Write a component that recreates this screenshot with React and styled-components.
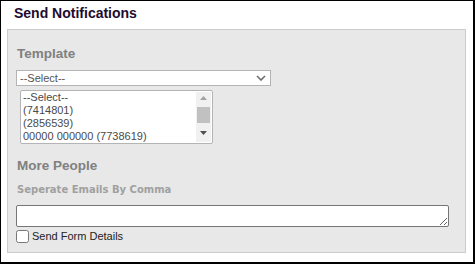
import React from "react";
import styled, { createGlobalStyle } from "styled-components";

const Global = createGlobalStyle`
  html, body { margin: 0; padding: 0; background: #fff; }
  body { font-family: "Liberation Sans", Arial, sans-serif; }
`;

const Frame = styled.div`
  box-sizing: border-box;
  width: 475px;
  height: 264px;
  border-style: solid;
  border-color: #000;
  border-width: 1px 2px 2px 1px;
  background: #fff;
  display: flex;
  flex-direction: column;
  padding: 4px 7px 9px 6px;
`;

const Title = styled.h2`
  margin: 0 0 8px 7px;
  font-size: 14px;
  line-height: 16px;
  font-weight: bold;
  color: #1e0b30;
`;

const Panel = styled.div`
  flex: 1;
  box-sizing: border-box;
  border: 1px solid #cccccc;
  background: #e8e8e8;
  padding: 16px 8px 0 8px;
  display: flex;
  flex-direction: column;
  align-items: flex-start;
`;

const Heading = styled.h3`
  margin: ${(p) => p.$top}px 0 ${(p) => p.$gap}px 1px;
  font-size: 13.5px;
  line-height: 16px;
  font-weight: bold;
  color: #808080;
`;

const Hint = styled.div`
  margin: 0 0 9px 1px;
  font-family: "DejaVu Sans", Verdana, sans-serif;
  font-size: 10px;
  line-height: 12px;
  font-weight: bold;
  color: #a0a0a0;
`;

const SelectBox = styled.div`
  box-sizing: border-box;
  width: 255px;
  height: 16px;
  border: 1px solid #b4b4b4;
  background: #fff;
  display: flex;
  align-items: center;
  justify-content: space-between;
  padding: 0 4px 0 3px;
  font-size: 11px;
  color: #545454;
`;

const ListBox = styled.div`
  box-sizing: border-box;
  margin: 4px 0 0 4px;
  width: 193px;
  height: 54px;
  border: 1px solid #b4b4b4;
  border-radius: 2px;
  background: #fff;
  display: flex;
`;

const Options = styled.div`
  flex: 1;
  display: flex;
  flex-direction: column;
  padding-left: 2px;
  overflow: hidden;
`;

const Option = styled.div`
  font-size: 11px;
  line-height: 13px;
  height: 13px;
  color: #4a4a4a;
  white-space: nowrap;
`;

const ScrollTrack = styled.div`
  width: 15px;
  margin: 1px 1px 1px 0;
  background: #f1f1f1;
  display: flex;
  flex-direction: column;
  align-items: center;
`;

const Arrow = styled.svg`
  display: block;
  flex: none;
`;

const Thumb = styled.div`
  width: 13px;
  height: 16px;
  background: #c1c1c1;
  margin: 3px 0 4px;
`;

const TextArea = styled.textarea`
  box-sizing: border-box;
  width: 433px;
  height: 22px;
  margin: 0;
  padding: 2px;
  border: 1px solid #767676;
  border-radius: 2px;
  background: #fff;
  font-family: "Liberation Mono", monospace;
  font-size: 13px;
`;

const CheckRow = styled.label`
  display: flex;
  align-items: center;
  margin-top: 3px;
  font-size: 11px;
  line-height: 13px;
  color: #222;
`;

const Check = styled.input`
  width: 13px;
  height: 13px;
  margin: 0 3px 0 0;
`;

export default function App() {
  const opts = ["--Select--", "(7414801)", "(2856539)", "00000 000000 (7738619)"];
  return (
    <>
      <Global />
      <Frame>
        <Title>Send Notifications</Title>
        <Panel>
          <Heading $top={0} $gap={8}>Template</Heading>
          <SelectBox>
            <span>--Select--</span>
            <svg width="10" height="6" viewBox="0 0 10 6">
              <path d="M1 1 L5 5 L9 1" fill="none" stroke="#6d6d6d" strokeWidth="1.6" />
            </svg>
          </SelectBox>
          <ListBox>
            <Options>
              {opts.map((o) => (
                <Option key={o}>{o}</Option>
              ))}
            </Options>
            <ScrollTrack>
              <Arrow width="15" height="12" viewBox="0 0 15 12">
                <path d="M4 8 L11 8 L7.5 4 Z" fill="#a3a3a3" />
              </Arrow>
              <Thumb />
              <Arrow width="15" height="12" viewBox="0 0 15 12">
                <path d="M4 4 L11 4 L7.5 8 Z" fill="#505050" />
              </Arrow>
            </ScrollTrack>
          </ListBox>
          <Heading $top={14} $gap={10}>More People</Heading>
          <Hint>Seperate Emails By Comma</Hint>
          <TextArea />
          <CheckRow>
            <Check type="checkbox" />
            Send Form Details
          </CheckRow>
        </Panel>
      </Frame>
    </>
  );
}
